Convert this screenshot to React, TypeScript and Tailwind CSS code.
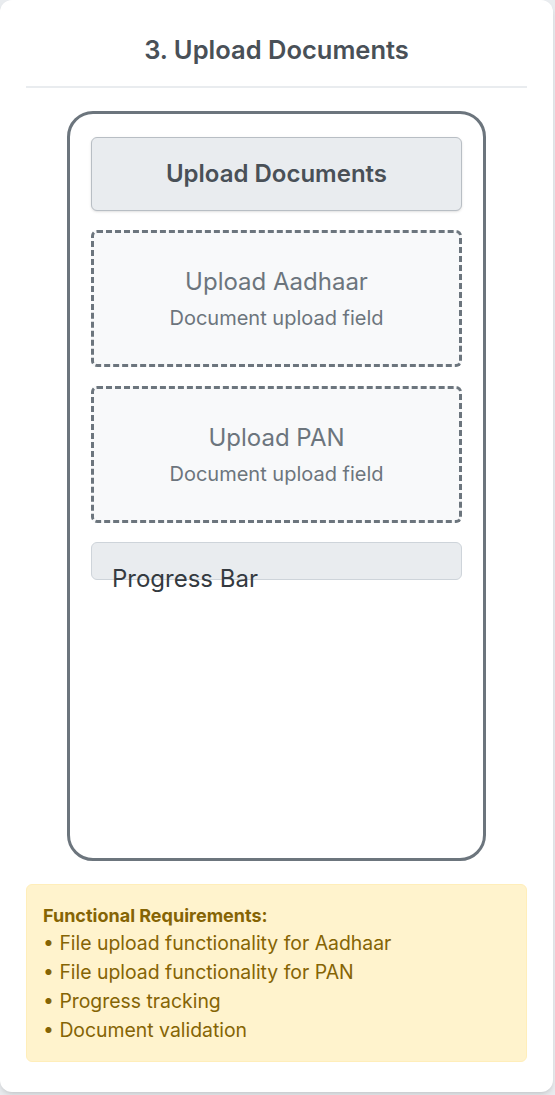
export default function App() {
  const requirements = [
    "File upload functionality for Aadhaar",
    "File upload functionality for PAN",
    "Progress tracking",
    "Document validation",
  ];

  return (
    <div
      className="min-h-[1095px] bg-[#e9ecef]"
      style={{ fontFamily: "Inter, 'Noto Sans', sans-serif" }}
    >
      <div className="h-[1092px] w-[553px] rounded-xl bg-white px-[26px] shadow-md">
        {/* Title */}
        <div className="border-b-2 border-[#e9ecef] pt-[33px] pb-[19px]">
          <h2 className="text-center text-[25.5px] leading-[34px] font-semibold text-[#495057]">
            3. Upload Documents
          </h2>
        </div>

        {/* Phone frame */}
        <div className="mx-auto mt-[23px] flex h-[750px] w-[419px] flex-col gap-[19px] rounded-[26px] border-[3px] border-[#6c757d] px-[21px] pt-[23px]">
          <div className="flex h-[74px] items-center justify-center rounded-md border border-[#b8bec4] bg-[#e9ecef] shadow-sm">
            <span className="text-[24px] font-semibold text-[#495057]">
              Upload Documents
            </span>
          </div>

          <UploadField label="Upload Aadhaar" />
          <UploadField label="Upload PAN" />

          <div className="h-[38px] rounded-md border border-[#ced4da] bg-[#e9ecef] px-5 pt-5">
            <span className="text-[24px] leading-8 text-[#343a40] whitespace-nowrap">
              Progress Bar
            </span>
          </div>
        </div>

        {/* Requirements */}
        <div className="mt-[23px] rounded-md border border-[#ffeeba] bg-[#fff3cd] px-4 pt-[17px] pb-[16px] text-[#856404]">
          <p className="text-[18px] leading-[27px] font-bold">
            Functional Requirements:
          </p>
          <ul className="text-[19.4px] leading-[29px]">
            {requirements.map((r) => (
              <li key={r}>• {r}</li>
            ))}
          </ul>
        </div>
      </div>
    </div>
  );
}

function UploadField({ label }: { label: string }) {
  return (
    <div className="flex h-[137px] flex-col items-center justify-center rounded-md border-[3px] border-dashed border-[#6c757d] bg-[#f8f9fa]">
      <span className="text-[24px] leading-[30px] text-[#6c757d]">{label}</span>
      <span className="mt-[8px] text-[20px] leading-[26px] text-[#6c757d]">
        Document upload field
      </span>
    </div>
  );
}
